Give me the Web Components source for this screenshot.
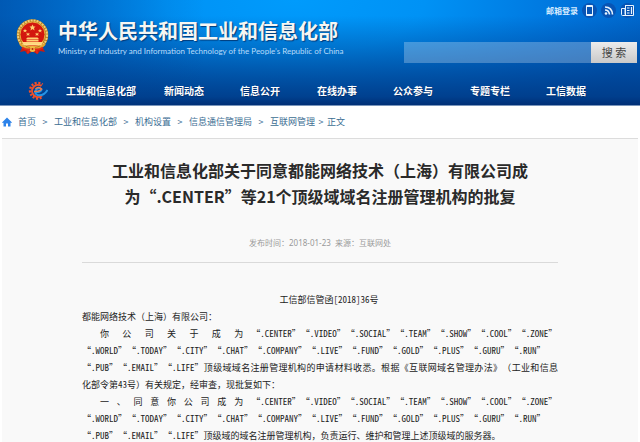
<!DOCTYPE html>
<html lang="zh-CN">
<head>
<meta charset="utf-8">
<title>中华人民共和国工业和信息化部</title>
<style>
body{margin:0;background:#fff;color:#222;font-family:"Noto Sans CJK SC",sans-serif;overflow:hidden;text-spacing-trim:space-all}
</style>
</head>
<body>
<site-header></site-header>
<site-breadcrumb></site-breadcrumb>
<notice-article>
  <span slot="title">工业和信息化部关于同意都能网络技术（上海）有限公司成<br>为“.CENTER”等21个顶级域域名注册管理机构的批复</span>
  <span slot="meta">发布时间：2018-01-23&nbsp; 来源：互联网处</span>
  <notice-body></notice-body>
</notice-article>
<script>
const define=(name,html)=>customElements.define(name,class extends HTMLElement{
  constructor(){super();this.attachShadow({mode:"open"}).innerHTML=html}
});

define("national-emblem",`<style>:host{display:block;width:33px;height:36px}svg{display:block;width:100%;height:100%}</style>
<svg viewBox="0 0 66 72" aria-hidden="true">
<path d="M14 54 8 66l10-2 5 6 10-5 10 5 5-6 10 2-6-12z" fill="#c91b10"/>
<circle cx="33" cy="32" r="31.500" fill="#b87e21"/>
<circle cx="33" cy="32" r="29" fill="none" stroke="#f0cf78" stroke-width="4" stroke-dasharray="4 2"/>
<circle cx="33" cy="31" r="25" fill="#d3170e" stroke="#e9ae3e" stroke-width="2"/>
<g fill="#ffd070"><path d="m33 11 2 4h4l-3 3 1 5-4-3-4 3 1-5-3-3h4z"/>
<path d="m18 19 1 3h3l-2 2 1 3-3-2-3 2 1-3-2-2h3zM24 27l1 2h3l-2 2 1 3-3-2-3 2 1-3-2-2h3zM42 27l1 2h3l-2 2 1 3-3-2-3 2 1-3-2-2h3zM48 19l1 3h3l-2 2 1 3-3-2-3 2 1-3-2-2h3z"/>
<path d="M23 37h20l3 3H20zM21 41h24v4H21zM12 46h42l-3 7H15z"/></g>
<path d="M14 48h38M16 51h34" stroke="#fff1a8" stroke-width="1"/>
<path d="M8 50q10 10 19 9M58 50q-10 10-19 9" fill="none" stroke="#e2a52f" stroke-width="4"/>
<circle cx="33" cy="60" r="6" fill="#f0bd43"/><circle cx="33" cy="60" r="2" fill="#b32312"/>
<path d="M12 57q9 5 14 4l-3 8M54 57q-9 5-14 4l3 8" fill="none" stroke="#e32818" stroke-width="4"/>
</svg>`);

define("site-brand",`<style>
:host{display:flex;align-items:flex-start;gap:9px}
h1{margin:0;font-size:20px;line-height:28px;font-weight:700;color:#f6f6f3;text-shadow:1px 1px 1px #003b7a;white-space:nowrap}
p{margin:0;font:8px/12px Lato,"Noto Sans CJK SC",sans-serif;color:#b9dcfb;white-space:nowrap}
national-emblem{margin-top:2px}
</style><national-emblem></national-emblem><div><h1>中华人民共和国工业和信息化部</h1><p>Ministry of Industry and Information Technology of the People’s Republic of China</p></div>`);

define("site-tools",`<style>
:host{display:flex;flex-direction:column;justify-content:space-between;height:61px}
nav{display:flex;justify-content:flex-end;align-items:center;gap:4px;height:17px;padding-right:2px}
a{color:#d6ecff;text-decoration:none;font-size:8px;line-height:14px;font-weight:700}
a.i{width:15px;height:15px;border-radius:8px;background:#0754b4}
svg{display:block;width:15px;height:15px}
form{display:flex;height:21px}
input{flex:1;min-width:0;border:0;margin:0;padding:0 6px;background:#ffffff42;color:#fff;font-size:10px;outline:0}
button{width:46px;border:0;padding:0;background:linear-gradient(#ececec,#c9c9c9);color:#444;font:11px/21px "Noto Sans CJK SC",sans-serif}
</style><nav aria-label="工具"><a href="#mail">邮箱登录</a>
<a class="i" href="#mobile" aria-label="手机"><svg viewBox="0 0 15 15"><path fill="#e8f5ff" fill-rule="evenodd" d="M5 2h5q1 0 1 1v9q0 1-1 1H5q-1 0-1-1V3q0-1 1-1zm0 2v7h5V4z"/></svg></a>
<a class="i" href="#rss" aria-label="订阅"><svg viewBox="0 0 15 15"><circle cx="5" cy="10.500" r="1.300" fill="#e8f5ff"/><path fill="none" stroke="#e8f5ff" stroke-width="1.600" d="M4 7q4 0 4.500 4.500M4 4q7 0 7.500 7.500"/></svg></a>
<a class="i" href="#news" aria-label="报刊"><svg viewBox="0 0 15 15"><path fill="none" stroke="#e8f5ff" stroke-width="1" d="M5 2.500h8.500v10h-11q-1 0-1-1v-6H5v6M5.500 3v9"/><path fill="none" stroke="#e8f5ff" stroke-width="1.200" d="M7 5h2.500M7 7.500h2.500M7 10h2.500M11.500 4v7"/></svg></a></nav>
<form onsubmit="return false"><input type="search" aria-label="搜索"><button>搜 索</button></form>`);

define("site-nav",`<style>
:host{display:grid;grid-template-columns:66fr 98fr 76fr 77fr 76fr 77fr 76fr 94fr;align-items:center;height:28px}
a{color:#fff;text-decoration:none;font-size:10px;line-height:16px;font-weight:700;white-space:nowrap;text-shadow:0 1px 1px #002c68}
svg{display:block;width:20px;height:20px;margin-left:28px}
</style><svg viewBox="0 0 40 40" aria-hidden="true">
<path d="M28 29A12 12 0 1 1 27 10" fill="none" stroke="#f0512b" stroke-width="4"/>
<path d="M27 33A15.500 15.500 0 1 1 29 7" fill="none" stroke="#f0512b" stroke-width="5" stroke-dasharray="4 3"/>
<path d="M13 22q13 1 14-5-6-5-11 1-4 7 3 10 12 3 20-10" fill="none" stroke="#2794e5" stroke-width="4"/>
<path d="M12 21q13 0 15-5-6-6-12 0" fill="none" stroke="#f57b43" stroke-width="3"/></svg>
<a href="#m">工业和信息化部</a><a href="#n">新闻动态</a><a href="#o">信息公开</a><a href="#s">在线办事</a><a href="#p">公众参与</a><a href="#t">专题专栏</a><a href="#d">工信数据</a>`);

define("site-header",`<style>
:host{display:block;border-bottom:1px solid #7995bb;background:
linear-gradient(90deg,#00429080,#00429000 32%),
linear-gradient(#003a8600 0 15%,#003a86e6 92%,#002f76),
radial-gradient(ellipse 58% 150% at 46% 0,#009bfc 0,#0092f5 35%,#0074dc 75%,#0064c8 100%)}
.top{display:flex;justify-content:space-between;height:77px}
site-brand{padding:17px 0 0 16px}
site-tools{width:233px;padding:2px 3px 0 0}
</style><header><div class="top"><site-brand></site-brand><site-tools></site-tools></div><site-nav></site-nav></header>`);

define("site-breadcrumb",`<style>
:host{display:block;background:#fff}
nav{display:flex;align-items:center;height:32px;margin:0 2px;border-bottom:1px solid #dcdcdc;font-size:9px;line-height:14px;color:#3c6e93}
a{color:inherit;text-decoration:none}
svg{display:block;width:10px;height:10px}
.home{margin-right:6px}
i{font-style:normal;width:18px;text-align:center}
i.n{width:12px}
</style><nav aria-label="当前位置"><a class="home" href="#home" aria-label="主页"><svg viewBox="0 0 20 20"><path fill="#2d83ea" d="M10 1 20 11l-2 1-1-1v8h-5v-6H8v6H3v-8l-1 1-2-1z"/></svg></a><a href="#1">首页</a><i>&gt;</i><a href="#2">工业和信息化部</a><i>&gt;</i><a href="#3">机构设置</a><i>&gt;</i><a href="#4">信息通信管理局</a><i>&gt;</i><a href="#5">互联网管理</a><i class="n">&gt;</i><span>正文</span></nav>`);

define("notice-article",`<style>
:host{display:block;margin:0 2px;padding:18px 80px 0;background:#f9f9f9}
h2{margin:0 -40px;font-size:16px;line-height:26px;font-weight:700;text-align:center;white-space:nowrap;color:#2a2a2a}
.meta{margin:26px 0 0;padding-bottom:11px;border-bottom:1px solid #dadada;text-align:center;font:8px/16px "Noto Sans","Noto Sans CJK SC",sans-serif;color:#999}
</style><article><h2><slot name="title"></slot></h2><p class="meta"><slot name="meta"></slot></p><slot></slot></article>`);

const first="“.CENTER”“.VIDEO”“.SOCIAL”“.TEAM”“.SHOW”“.COOL”“.ZONE”";
const second="“.WORLD”“.TODAY”“.CITY”“.CHAT”“.COMPANY”“.LIVE”“.FUND”“.GOLD”“.PLUS”“.GURU”“.RUN”";
define("notice-body",`<style>
:host{display:block;padding-top:28px;font:9px/17px "Noto Sans Mono CJK SC","Noto Sans CJK SC",monospace;color:#222}
p{margin:0}
.no{text-align:center;text-indent:18px}
.first{display:flex;padding-left:18px;gap:8px;white-space:nowrap}
.first span{flex:0 0 67%;text-align-last:justify}
.first span:first-child{flex:1}
.row{display:block;white-space:nowrap}
.full{text-align-last:justify}
.names{padding-right:8px}
</style>
<p class="no">工信部信管函[2018]36号</p>
<p>都能网络技术（上海）有限公司：</p>
<p><span class="first"><span>你 公 司 关 于 成 为</span><span>${first}</span></span><span class="row full names">${second}</span><span class="row full">“.PUB”“.EMAIL”“.LIFE”顶级域域名注册管理机构的申请材料收悉。根据《互联网域名管理办法》（工业和信息</span><span class="row">化部令第43号）有关规定，经审查，现批复如下：</span></p>
<p><span class="first"><span>一 、 同 意 你 公 司 成 为</span><span>${first}</span></span><span class="row full names">${second}</span><span class="row">“.PUB”“.EMAIL”“.LIFE”顶级域的域名注册管理机构，负责运行、维护和管理上述顶级域的服务器。</span></p>`);
</script>
</body>
</html>
